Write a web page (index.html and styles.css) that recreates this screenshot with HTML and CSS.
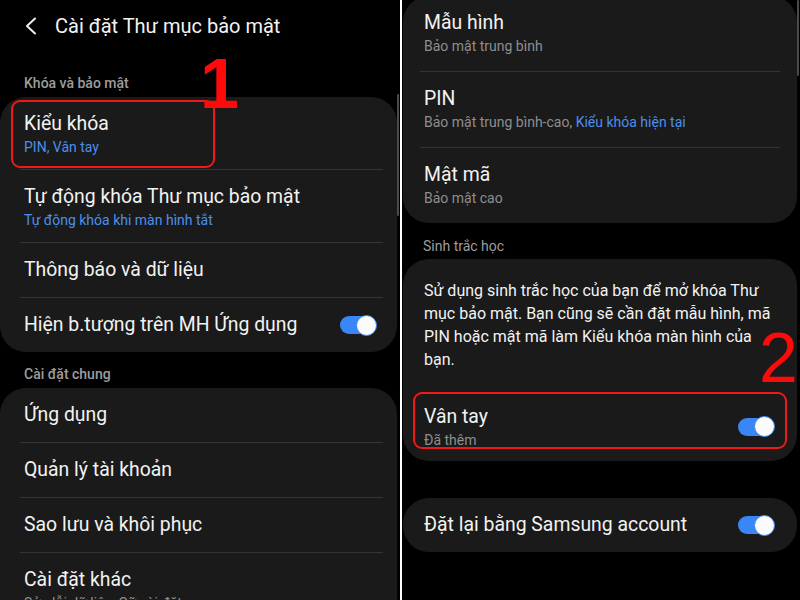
FILE: index.html
```html
<!DOCTYPE html>
<html lang="vi">
<head>
<meta charset="utf-8">
<title>Thư mục bảo mật</title>
<link rel="stylesheet" href="styles.css">
</head>
<body>
<div class="screen">
  <section class="panel panel-left">
    <header class="topbar">
      <svg class="back" width="14" height="18" viewBox="0 0 14 18"><polyline points="11,1.5 3,9 11,16.5" fill="none" stroke="#eeeeee" stroke-width="2" stroke-linecap="round" stroke-linejoin="round"/></svg>
      <h1 class="title">Cài đặt Thư mục bảo mật</h1>
    </header>
    <div class="label label-first">Khóa và bảo mật</div>
    <div class="card card-left">
      <div class="row two">
        <div class="t">Kiểu khóa</div>
        <div class="s blue">PIN, Vân tay</div>
        <span class="mark mark-one"></span>
      </div>
      <div class="sep"></div>
      <div class="row two">
        <div class="t">Tự động khóa Thư mục bảo mật</div>
        <div class="s blue">Tự động khóa khi màn hình tắt</div>
      </div>
      <div class="sep"></div>
      <div class="row one"><div class="t">Thông báo và dữ liệu</div></div>
      <div class="sep"></div>
      <div class="row one switch-row">
        <div class="t">Hiện b.tượng trên MH Ứng dụng</div>
        <span class="toggle"><span class="knob"></span></span>
      </div>
    </div>
    <div class="label label-next">Cài đặt chung</div>
    <div class="card card-left">
      <div class="row one"><div class="t">Ứng dụng</div></div>
      <div class="sep"></div>
      <div class="row one"><div class="t">Quản lý tài khoản</div></div>
      <div class="sep"></div>
      <div class="row one"><div class="t">Sao lưu và khôi phục</div></div>
      <div class="sep"></div>
      <div class="row two">
        <div class="t">Cài đặt khác</div>
        <div class="s">Sửa lỗi dữ liệu, Gỡ cài đặt</div>
      </div>
    </div>
    <span class="num num-one">1</span>
    <span class="scrollbar scroll-left"></span>
  </section>

  <div class="divider"></div>

  <section class="panel panel-right">
    <div class="card card-right card-top">
      <div class="row two">
        <div class="t">Mẫu hình</div>
        <div class="s">Bảo mật trung bình</div>
      </div>
      <div class="sep"></div>
      <div class="row two">
        <div class="t">PIN</div>
        <div class="s">Bảo mật trung bình-cao, <span class="blue">Kiểu khóa hiện tại</span></div>
      </div>
      <div class="sep"></div>
      <div class="row two">
        <div class="t">Mật mã</div>
        <div class="s">Bảo mật cao</div>
      </div>
    </div>
    <div class="label label-bio">Sinh trắc học</div>
    <div class="card card-right card-bio">
      <p class="para">Sử dụng sinh trắc học của bạn để mở khóa Thư mục bảo mật. Bạn cũng sẽ cần đặt mẫu hình, mã PIN hoặc mật mã làm Kiểu khóa màn hình của bạn.</p>
      <div class="row finger-row">
        <div class="texts">
          <div class="t">Vân tay</div>
          <div class="s">Đã thêm</div>
        </div>
        <span class="toggle"><span class="knob"></span></span>
        <span class="mark mark-two"></span>
      </div>
    </div>
    <div class="card card-right card-reset">
      <div class="row one switch-row">
        <div class="t">Đặt lại bằng Samsung account</div>
        <span class="toggle"><span class="knob"></span></span>
      </div>
    </div>
    <span class="num num-two">2</span>
    <span class="scrollbar scroll-right"></span>
  </section>
</div>
</body>
</html>
```
FILE: styles.css
```css
* { box-sizing: border-box; }
html, body {
  margin: 0;
  padding: 0;
  background: #000;
}
body {
  width: 800px;
  height: 600px;
  overflow: hidden;
  font-family: Roboto, "Noto Sans", sans-serif;
  color: #f2f2f2;
}
.screen {
  display: flex;
  width: 800px;
  height: 600px;
}
.panel {
  position: relative;
  height: 600px;
  overflow: hidden;
  display: flex;
  flex-direction: column;
  background: #000;
}
.panel-left { width: 400px; }
.panel-right { width: 398px; }
.divider {
  width: 2px;
  height: 600px;
  background: #ffffff;
}

/* header */
.topbar {
  display: flex;
  align-items: center;
  height: 24px;
  margin-top: 14px;
  padding-left: 24px;
}
.back { display: block; margin-right: 17px; }
.title {
  margin: 0;
  font-size: 20px;
  font-weight: 400;
  line-height: 24px;
  color: #f2f2f2;
}

/* section labels */
.label {
  font-size: 14px;
  line-height: 20px;
  color: #9d9d9d;
  padding-left: 24px;
  margin-bottom: 4px;
}
.label-first { margin-top: 35px; font-weight: 500; }
.label-next { margin-top: 12px; font-weight: 500; }
.label-bio { margin-top: 13px; margin-bottom: 3px; padding-left: 21px; }

/* cards */
.card {
  background: #1a1a1a;
  border-radius: 26px;
  flex: none;
}
.card-left {
  width: 397px;
  margin-left: 0;
}
.card-right {
  width: 394px;
  margin-left: 1px;
}
.card-top { margin-top: -4px; }
.card-reset { margin-top: 37px; }

.sep {
  height: 1px;
  background: #343434;
}
.card-left .sep { margin: 0 14px 0 20px; }
.card-right .sep { margin: 0 17px; }

.row {
  position: relative;
}
.card-left .row { padding-left: 24px; padding-right: 21px; }
.card-right .row { padding-left: 21px; padding-right: 23px; }

.row.two { height: 72px; padding-top: 15px; }
.card-right .row.two { height: 75px; padding-top: 15px; }
.row.one {
  height: 54px;
  display: flex;
  align-items: center;
}
.switch-row { justify-content: space-between; }

.t {
  font-size: 19.4px;
  line-height: 24px;
  color: #f2f2f2;
  white-space: nowrap;
}
.s {
  margin-top: 1px;
  font-size: 14px;
  line-height: 20px;
  color: #8e8e8e;
  white-space: nowrap;
}
.blue { color: #4a8ff0; }

/* biometric card */
.card-bio { padding-top: 20px; }
.para {
  margin: 0;
  padding: 0 12px 0 21px;
  font-size: 16px;
  line-height: 23px;
  color: #f2f2f2;
}
.finger-row {
  display: flex;
  align-items: center;
  justify-content: space-between;
  padding-top: 34px;
  padding-bottom: 11px;
}

/* toggle */
.toggle {
  display: flex;
  justify-content: flex-end;
  align-items: center;
  width: 36px;
  height: 18px;
  border-radius: 9px;
  background: #3a86f4;
  flex: none;
}
.knob {
  width: 21px;
  height: 21px;
  border-radius: 50%;
  background: #fbfbfb;
  border: 1.5px solid #3a86f4;
  margin-right: -1px;
}
.finger-row .toggle { margin-top: -2px; }

/* annotations */
.mark {
  position: absolute;
  border: 2px solid #f01818;
  border-radius: 9px;
}
.mark-one {
  left: 11px;
  top: 3px;
  width: 204px;
  height: 68px;
}
.mark-two {
  left: 10px;
  top: 21px;
  width: 374px;
  height: 57px;
}
.num {
  position: absolute;
  font-family: "Liberation Sans", Arial, sans-serif;
  font-size: 70px;
  line-height: 70px;
  color: #ff0a0a;
}
.num-one {
  left: 200px;
  top: 49px;
  font-weight: 700;
}
.num-two {
  left: 357px;
  top: 323px;
}

.scrollbar {
  position: absolute;
  width: 2px;
  border-radius: 1px;
  background: #4a4a4a;
}
.scroll-left { left: 397px; top: 94px; height: 122px; }
.scroll-right { left: 395px; top: 0; height: 76px; }
```
